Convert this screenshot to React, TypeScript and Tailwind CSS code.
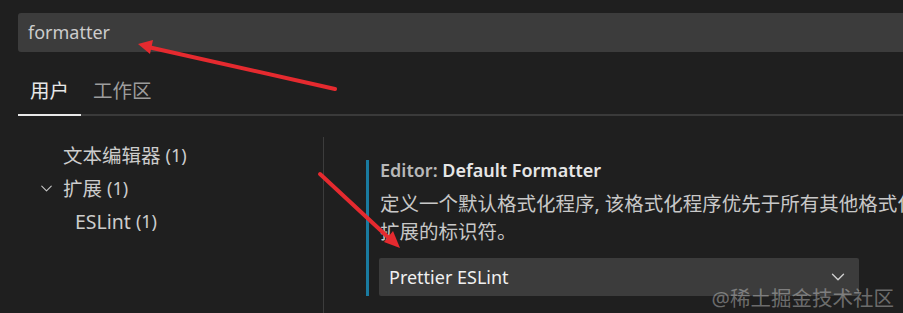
import { ChevronDown } from "lucide-react";

const font = { fontFamily: '"Noto Sans", "Noto Sans CJK SC", sans-serif' };

function TreeItem({ name, count, indent, open }: { name: string; count: string; indent: string; open?: boolean }) {
  return (
    <div className={`flex items-center h-[33px] whitespace-nowrap text-[#cccccc] ${indent}`}>
      {open && <ChevronDown className="w-[19px] h-[19px] text-[#c5c5c5] -ml-[26px] mr-[7px]" strokeWidth={1.4} />}
      <span className="text-[19.5px]">{name}</span>
      <span className="text-[18px] ml-[5px]">{count}</span>
    </div>
  );
}

export default function App() {
  return (
    <div className="relative w-[903px] h-[313px] overflow-hidden bg-[#1f1f1f]" style={font}>
      {/* search */}
      <div className="pt-[13px] pl-[18px]">
        <div className="h-[39px] w-[900px] bg-[#3c3c3c] rounded-[3px] flex items-center pl-[10px]">
          <span className="text-[18px] text-[#cccccc]">formatter</span>
        </div>
      </div>

      {/* tabs */}
      <div className="mt-[16px] ml-[18px] flex border-b-2 border-[#3a3a3a] h-[48px]">
        <div className="px-[12px] flex items-center border-b-2 border-[#e8e8e8] -mb-[2px] text-[19.5px] text-[#e7e7e7]">
          用户
        </div>
        <div className="px-[12px] flex items-center text-[19.5px] text-[#9d9d9d]">工作区</div>
      </div>

      {/* body */}
      <div className="flex">
        <div className="w-[323px] shrink-0 pt-[23px] flex flex-col">
          <TreeItem name="文本编辑器" count="(1)" indent="pl-[63px]" />
          <TreeItem name="扩展" count="(1)" indent="pl-[63px]" open />
          <TreeItem name="ESLint" count="(1)" indent="pl-[75px]" />
        </div>
        <div className="mt-[21px] w-px shrink-0 h-[200px] bg-[#3c3c3c]" />
        <div className="pl-[42px] pt-[42px] shrink-0">
          <div className="flex">
            <div className="w-[3px] mt-[2px] bg-[#1a7ba0]" />
            <div className="pl-[11px]">
              <div className="text-[18px] leading-[24px] font-semibold">
                <span className="text-[#b8b8b8]">Editor: </span>
                <span className="text-[#e6e6e6]">Default Formatter</span>
              </div>
              <div className="mt-[8px] text-[19.5px] leading-[28px] text-[#c8c8c8] whitespace-nowrap">
                <div>定义一个默认格式化程序, 该格式化程序优先于所有其他格式化程序设置。</div>
                <div>扩展的标识符。</div>
              </div>
              <div className="mt-[12px] h-[38px] w-[480px] -ml-[1px] bg-[#3c3c3c] rounded-[2px] flex items-center justify-between pl-[10px] pr-[10px]">
                <span className="text-[18px] text-[#f0f0f0]">Prettier ESLint</span>
                <ChevronDown className="w-[22px] h-[22px] text-[#d0d0d0]" strokeWidth={1.5} />
              </div>
            </div>
          </div>
        </div>
      </div>

      {/* watermark */}
      <div className="absolute right-[9px] -bottom-[1px] text-[20.5px] text-white/35">
        @稀土掘金技术社区
      </div>

      {/* annotation arrows */}
      <svg className="absolute inset-0 pointer-events-none" width="903" height="313">
        <line x1="335" y1="89" x2="148" y2="47" stroke="#e52a2f" strokeWidth="4" strokeLinecap="round" />
        <polygon points="138,44 153,40 150,54" fill="#e52a2f" />
        <line x1="320" y1="174" x2="390" y2="239" stroke="#e52a2f" strokeWidth="4" strokeLinecap="round" />
        <polygon points="400,248 393,231 384,242" fill="#e52a2f" />
      </svg>
    </div>
  );
}
